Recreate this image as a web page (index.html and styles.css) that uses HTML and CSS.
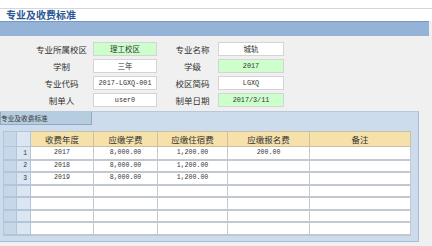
FILE: index.html
```html
<!DOCTYPE html>
<html>
<head>
<meta charset="utf-8">
<link rel="stylesheet" href="styles.css">
</head>
<body>
<div class="topstrip"></div>
<div class="title">专业及收费标准</div>
<div class="bar"></div>
<div class="form">
  <div class="label">专业所属校区</div><div class="field green cjk">理工校区</div>
  <div class="label">专业名称</div><div class="field cjk">城轨</div>
  <div class="label">学制</div><div class="field cjk">三年</div>
  <div class="label">学级</div><div class="field green">2017</div>
  <div class="label">专业代码</div><div class="field">2017-LGXQ-001</div>
  <div class="label">校区简码</div><div class="field">LGXQ</div>
  <div class="label">制单人</div><div class="field">user0</div>
  <div class="label">制单日期</div><div class="field green">2017/3/11</div>
</div>
<div class="panel">
  <div class="tab">专业及收费标准</div>
  <table class="grid">
    <colgroup>
      <col class="w-rh1"><col class="w-rh2"><col class="w-c1"><col class="w-c2"><col class="w-c3"><col class="w-c4"><col class="w-c5">
    </colgroup>
    <thead>
      <tr><th class="rh1"></th><th class="rh2"></th><th>收费年度</th><th>应缴学费</th><th>应缴住宿费</th><th>应缴报名费</th><th>备注</th></tr>
    </thead>
    <tbody>
      <tr class="r13"><td class="rh1"></td><td class="rh2">1</td><td>2017</td><td>8,000.00</td><td>1,200.00</td><td>200.00</td><td></td></tr>
      <tr class="r12"><td class="rh1"></td><td class="rh2">2</td><td>2018</td><td>8,000.00</td><td>1,200.00</td><td></td><td></td></tr>
      <tr class="r13"><td class="rh1"></td><td class="rh2">3</td><td>2019</td><td>8,000.00</td><td>1,200.00</td><td></td><td></td></tr>
      <tr class="r12"><td class="rh1"></td><td class="rh2"></td><td></td><td></td><td></td><td></td><td></td></tr>
      <tr class="r13"><td class="rh1"></td><td class="rh2"></td><td></td><td></td><td></td><td></td><td></td></tr>
      <tr class="r12"><td class="rh1"></td><td class="rh2"></td><td></td><td></td><td></td><td></td><td></td></tr>
      <tr class="r13"><td class="rh1"></td><td class="rh2"></td><td></td><td></td><td></td><td></td><td></td></tr>
    </tbody>
  </table>
</div>
</body>
</html>
```
FILE: styles.css
```css
* { box-sizing: border-box; }
html, body { margin: 0; padding: 0; }
body {
  width: 432px;
  height: 246px;
  overflow: hidden;
  background: #f0f0f0;
  font-family: "Noto Sans CJK SC", "Liberation Sans", sans-serif;
  color: #333;
}
.topstrip {
  height: 9px;
  background: #fff;
  border-bottom: 1px solid #d6d6d6;
}
.title {
  height: 12px;
  background: #fff;
  padding-left: 6px;
  font-size: 10px;
  line-height: 12px;
  font-weight: bold;
  color: #2a5696;
}
.bar {
  height: 15px;
  margin-right: 3px;
  background: #95b3d7;
  border-top: 1px solid #7797c2;
}
.form {
  display: grid;
  grid-template-columns: 51px 64px 50px 65px;
  grid-auto-rows: 14px;
  align-content: start;
  column-gap: 6px;
  row-gap: 3px;
  padding: 6px 0 0 36px;
  height: 75px;
}
.form .label:nth-child(4n+3) { margin-left: 9px; }
.form .field:nth-child(4n) { margin-left: -1px; }
.label {
  height: 14px;
  font-size: 8.5px;
  line-height: 14px;
  text-align: center;
  color: #333;
  white-space: nowrap;
}
.field {
  height: 14px;
  background: #fff;
  border: 1px solid #d4d4d4;
  font-family: "Liberation Mono", monospace;
  font-size: 6.8px;
  line-height: 12px;
  text-align: center;
  color: #333;
}
.field.cjk {
  font-family: "Noto Sans CJK SC", sans-serif;
  font-size: 7.5px;
}
.field.green { background: #ccffcc; }
.panel {
  width: 419px;
  height: 131px;
  background: #cddcec;
  border: 1px solid #a7bdd6;
  border-left: none;
  border-top: 1px solid #b5c8dc;
  padding: 0 8px 0 3px;
}
.tab {
  width: 92px;
  height: 13px;
  margin-left: -3px;
  background: #b6cde0;
  border: 1px solid #8eaac6;
  border-top: none;
  font-size: 6.7px;
  line-height: 12px;
  color: #333;
  white-space: nowrap;
}
.grid {
  margin-top: 6px;
  border-collapse: collapse;
  table-layout: fixed;
  width: 407px;
}
.w-rh1 { width: 13px; }
.w-rh2 { width: 14px; }
.w-c1 { width: 63px; }
.w-c2 { width: 64px; }
.w-c3 { width: 70px; }
.w-c4 { width: 82px; }
.w-c5 { width: 101px; }
.grid th {
  height: 15px;
  background: #f6e1aa;
  border: 1px solid #c9c1a6;
  font-weight: normal;
  font-size: 8.5px;
  line-height: 13px;
  padding: 0;
  color: #333;
}
.grid td {
  padding: 0;
  background: #fff;
  border-left: 1px solid #c6c9cc;
  border-right: 1px solid #c6c9cc;
  border-bottom: 2px solid #c2c8cf;
  font-family: "Liberation Mono", monospace;
  font-size: 6.6px;
  text-align: center;
  line-height: 10px;
  color: #333;
}
.r13 td { height: 13px; }
.r12 td { height: 12px; }
.grid .rh1 {
  background: #c6d7ea;
  border-color: #b3c5d9;
}
.grid .rh2 {
  background: #dbe6f2;
  border-color: #b3c5d9;
  text-align: right;
  padding-right: 3px;
  vertical-align: bottom;
  font-size: 6.4px;
}
```
